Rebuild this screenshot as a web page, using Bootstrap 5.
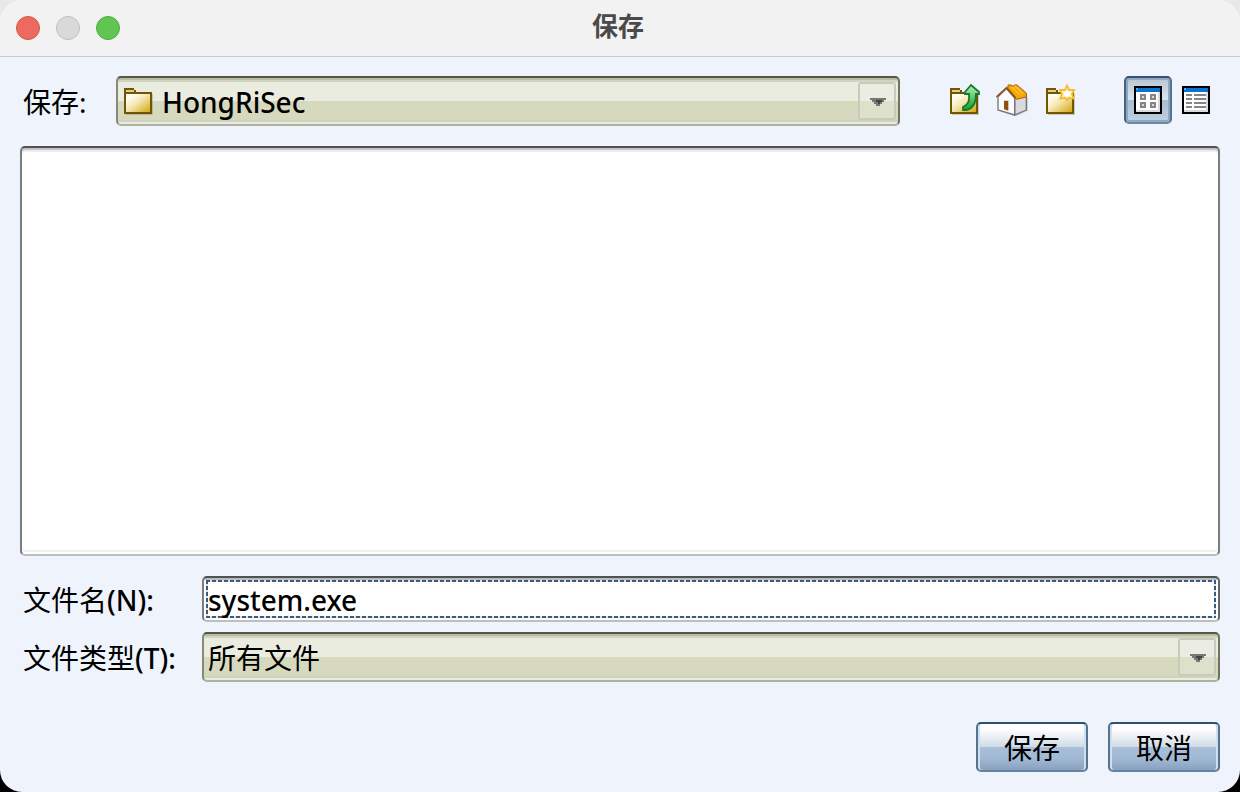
<!DOCTYPE html>
<html lang="zh-CN">
<head>
<meta charset="utf-8">
<meta name="viewport" content="width=device-width, initial-scale=1">
<title>保存</title>
<link href="https://cdn.jsdelivr.net/npm/bootstrap@5.3.0/dist/css/bootstrap.min.css" rel="stylesheet">
<style>
body{background:linear-gradient(#e8e8e8 50%,#000 50%);font-family:"Noto Sans","Noto Sans CJK SC",sans-serif;font-size:28px;line-height:40px;color:#000}
.dialog{background:#eff3fb;border-radius:22px;overflow:hidden}
.titlebar{height:57px;background:#f3f2f2;border-bottom:1px solid #c8c9d2;padding-right:4px}
.titlebar h1{font-size:26px;line-height:40px;font-weight:700;color:#4a4a4a;padding-top:6px}
.light{width:24px;height:24px;border-radius:50%;border:1px solid;padding:0}
.red{background:#ed6a5e;border-color:#d35549}
.gray{background:#d9d9d9;border-color:#bcbcbc}
.green{background:#61c554;border-color:#4dac40}
.lights{left:16px;top:16px;gap:16px}
.content{padding:19px 20px 20px}
.latin{font-size:28px;font-weight:500}
.combo{height:50px;border:2px solid;border-color:#55573f #6f725c #b0b2a0 #878a76;border-radius:5px;background:linear-gradient(#babca8 2px,#d2d4c2 2px,#d2d4c2 4px,#eaecdf 4px,#eaecdf 23px,#d6d9be 23px,#d6d9be 42px,#cfd1c1 42px,#cfd1c1 44px,#eaecdf 44px)}
.combo select{appearance:none;background:none;border:0;outline:0;width:100%;height:46px;padding:2px 44px 0 4px;color:#000;line-height:40px}
.combo.with-icon select{padding-left:44px}
.combo .folder{left:4px;top:6px}
.arrow{right:2px;top:4px;width:38px;height:38px;border:2px solid #c9cbba;border-radius:3px;background:linear-gradient(#ebede3 50%,#dde0ca 50%);pointer-events:none}
.look{margin-bottom:20px}
.tools{margin:0 40px}
.tool{width:48px;height:48px;border:2px solid transparent;border-radius:5px;background:none;padding:0;display:grid;place-items:center}
.tool.on{border-color:#34526f #54718e #6889a7 #446380;background:linear-gradient(#b5c4d3,#dce5ed 50%,#a8bdd3 50%,#c0d0e1);box-shadow:inset 0 0 0 2px #8fa8bf}
.files{border:2px solid;border-color:#505153 #7b7c7e #bdbec0 #7b7c7e;border-radius:5px;background:#fff;box-shadow:inset 0 2px #c4c4c4,inset 0 4px #ededed,inset 0 -2px #fff,inset 0 -4px #f0f0f0;min-height:120px}
.fields{display:grid;grid-template-columns:182px 1fr;row-gap:10px;padding-top:20px}
.fields label,.look label{padding:2px 0 0 3px}
.look label{width:96px}
.name{height:46px;border:2px solid;border-color:#505153 #66676a #bdbec0 #7b7c7e;border-radius:5px;padding:2px;background:linear-gradient(#bcbcbf 2px,#fff 2px)}
.name input{width:100%;height:38px;border:0;outline:0;padding:2px 2px 0;color:#000;
background:repeating-linear-gradient(90deg,#3b5a7c 0 4px,#dfe4ea 4px 6px) 0 0/100% 2px no-repeat,repeating-linear-gradient(90deg,#3b5a7c 0 4px,#dfe4ea 4px 6px) 0 100%/100% 2px no-repeat,repeating-linear-gradient(#3b5a7c 0 4px,#dfe4ea 4px 6px) 0 0/2px 100% no-repeat,repeating-linear-gradient(#3b5a7c 0 4px,#dfe4ea 4px 6px) 100% 0/2px 100% no-repeat,#fff}
.action{width:112px;height:50px;border:2px solid;border-color:#2f506f #54738f #6584a1 #54738f;border-radius:5px;padding:2px 0 0;line-height:40px;color:#000;background:linear-gradient(#fff 10%,#d0dbe6 50%,#a9bfd9 50%,#a1b9d3 75%,#86a1bf);box-shadow:inset 2px 0 #d3deeb,inset -2px 0 #d3deeb}
.actions{gap:20px;padding-top:40px}
</style>
</head>
<body>
<svg class="position-absolute" width="0" height="0" xmlns="http://www.w3.org/2000/svg">
<defs>
<linearGradient id="gold" x1="0" y1="0" x2="1" y2="1"><stop offset=".15" stop-color="#fffef4"/><stop offset=".45" stop-color="#f5e9b8"/><stop offset="1" stop-color="#d3a80d"/></linearGradient>
<linearGradient id="leaf" x1="0" y1="0" x2="0" y2="1"><stop offset="0" stop-color="#b5efb9"/><stop offset=".5" stop-color="#5fcb6a"/><stop offset="1" stop-color="#149b2c"/></linearGradient>
</defs>
<symbol id="folder" viewBox="0 0 16 16"><path d="M2 15.500h13.500V5H15v10H2z" fill="#77776a" opacity=".35"/><path d="M1 2h5v1h1v1h8v11H1z" fill="#705600"/><path d="M2 3h4v1H2z" fill="#e4cf88"/><path d="M2 5h12v9H2z" fill="url(#gold)"/></symbol>
<symbol id="caret" viewBox="0 0 34 34"><path d="M10 14h16v2h-2v2h-2v2h-2v2h-4v-2h-2v-2h-2v-2h-2z" fill="#777"/><path d="M16 16h6v2h-2v2h-2v-2h-2z" fill="#444"/></symbol>
</svg>
<main class="dialog d-flex flex-column min-vh-100">
<header class="titlebar position-relative text-center">
<div class="lights d-flex position-absolute"><button class="light red" aria-label="关闭"></button><button class="light gray" aria-label="最小化"></button><button class="light green" aria-label="缩放"></button></div>
<h1 class="m-0">保存</h1>
</header>
<form class="content d-flex flex-column flex-grow-1">
<div class="look d-flex">
<label for="dir" class="align-self-center">保存:</label>
<div class="combo with-icon position-relative flex-grow-1"><svg class="folder position-absolute" width="32" height="32" shape-rendering="crispEdges"><use href="#folder"/></svg><select id="dir" class="latin"><option>HongRiSec</option></select><span class="arrow position-absolute"><svg class="d-block" width="34" height="34" shape-rendering="crispEdges"><use href="#caret"/></svg></span></div>
<div class="tools d-flex">
<button type="button" class="tool" aria-label="向上"><svg width="32" height="32" viewBox="0 0 16 16"><use href="#folder"/><path d="M11.500 .5L8.500 4v1h2v2.500c0 2-1 3-3 4v1.500h2c3-.8 4.500-3.500 4.500-8h1.500V4z" fill="url(#leaf)" stroke="#167a35" stroke-width=".9"/></svg></button>
<button type="button" class="tool" aria-label="主目录"><svg width="32" height="32" viewBox="12 12 96 96"><path d="M22 94l46 13 36-14V52l5 4v36l-38 18z" fill="#999" opacity=".4"/><path d="M68 54l35-12v48l-35 15z" fill="#d9d9df" stroke="#77777c" stroke-width="4"/><path d="M18 50l25-24 25 28v51L18 90z" fill="#fbfbfd" stroke="#77777c" stroke-width="4"/><path d="M48 22V15h10v5l10-5h7l28 24v12l-30 7-27-33z" fill="#f6a509" stroke="#a66400" stroke-width="3"/><path d="M58 20l25 24M68 17l25 24" stroke="#ffc638" stroke-width="4"/><path d="M13 51l31-28 27 31" fill="none" stroke="#915209" stroke-width="5"/><path d="M36 62h13v30l-13-4z" fill="#91500f"/></svg></button>
<button type="button" class="tool" aria-label="新建文件夹"><svg width="32" height="32" viewBox="0 0 16 16"><use href="#folder"/><path d="M11.500 .7l1 2.300h2.500l-1 2 .8 2.300-2.300-.4-1 1.100-1-1.100-2.300.4.8-2.300-1-2h2.500z" fill="#fff2c4" stroke="#f9bd29" stroke-width=".9"/><circle cx="11.500" cy="4.700" r="1.500" fill="#fff"/></svg></button>
</div>
<button type="button" class="tool on" aria-label="列表" aria-pressed="true"><svg width="32" height="32" viewBox="0 0 16 16" shape-rendering="crispEdges"><path d="M1 1h14v14H1z"/><path d="M2 2h12v2H2z" fill="#0873d1"/><path d="M2 2h1v1H2z" fill="#55a9ef"/><path d="M2 4h12v10H2z" fill="#d9d9df"/><path d="M2 4h11v9H2z" fill="#fff"/><path d="M4 5h3v3H4zM9 5h3v3H9zM4 9h3v3H4zM9 9h3v3H9z" fill="#858585"/><path d="M5 6h1v1H5zM10 6h1v1h-1zM5 10h1v1H5zM10 10h1v1h-1z" fill="#ddd"/></svg></button>
<button type="button" class="tool" aria-label="详细信息"><svg width="32" height="32" viewBox="0 0 16 16" shape-rendering="crispEdges"><path d="M1 1h14v14H1z"/><path d="M2 2h12v2H2z" fill="#0873d1"/><path d="M2 2h1v1H2z" fill="#55a9ef"/><path d="M2 4h12v10H2z" fill="#d9d9df"/><path d="M2 4h11v9H2z" fill="#fff"/><path d="M3 5h3v1H3zM7 5h6v1H7zM3 7h3v1H3zM7 7h6v1H7zM3 9h3v1H3zM7 9h6v1H7zM3 11h3v1H3zM7 11h6v1H7z" fill="#858585"/></svg></button>
</div>
<div class="files flex-grow-1" role="listbox" aria-label="文件"></div>
<div class="fields align-items-center">
<label for="fname">文件名<span class="latin">(N):</span></label><div class="name"><input id="fname" class="latin d-block" value="system.exe"></div>
<label for="ftype">文件类型<span class="latin">(T):</span></label><div class="combo position-relative"><select id="ftype"><option>所有文件</option></select><span class="arrow position-absolute"><svg class="d-block" width="34" height="34" shape-rendering="crispEdges"><use href="#caret"/></svg></span></div>
</div>
<div class="actions d-flex justify-content-end"><button type="submit" class="action">保存</button><button type="button" class="action">取消</button></div>
</form>
</main>
<script src="https://cdn.jsdelivr.net/npm/bootstrap@5.3.0/dist/js/bootstrap.bundle.min.js"></script>
</body>
</html>
